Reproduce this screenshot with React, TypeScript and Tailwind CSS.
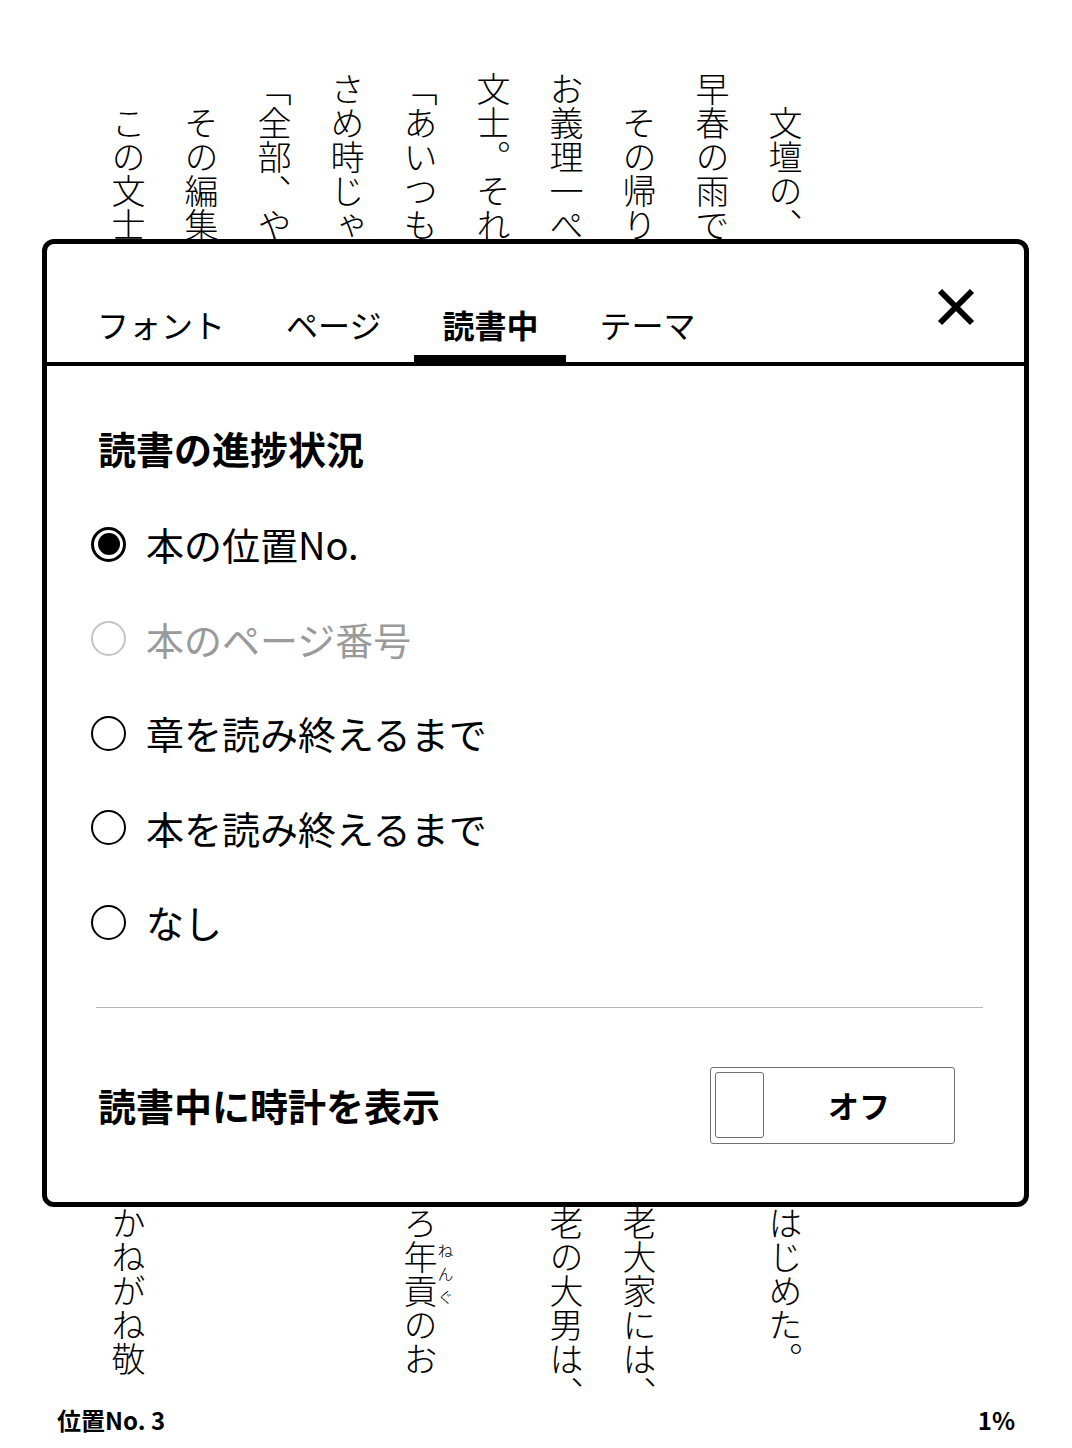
import React from "react";

const cols: { top: string; bottom: React.ReactNode }[] = [
  { top: "　文壇の、新しい風が吹き", bottom: "はじめた。" },
  { top: "早春の雨で、町は冷たく", bottom: "" },
  { top: "　その帰り道、", bottom: "老大家には、" },
  { top: "お義理一ぺんの挨拶をして", bottom: "老の大男は、" },
  { top: "文士。それは誰もが知る", bottom: "" },
  {
    top: "「あいつも、もう駄目だ",
    bottom: (
      <>
        ろ<ruby>
          年貢<rt className="text-[16px]">ねんぐ</rt>
        </ruby>
        のお
      </>
    ),
  },
  { top: "さめ時じゃないか", bottom: "" },
  { top: "「全部、やめてしまえ", bottom: "" },
  { top: "　その編集者は、", bottom: "" },
  { top: "　この文士の作品を、", bottom: "かねがね敬" },
];

const options = [
  { label: "本の位置No.", selected: true, disabled: false },
  { label: "本のページ番号", selected: false, disabled: true },
  { label: "章を読み終えるまで", selected: false, disabled: false },
  { label: "本を読み終えるまで", selected: false, disabled: false },
  { label: "なし", selected: false, disabled: false },
];

const tabs = [
  { label: "フォント", active: false },
  { label: "ページ", active: false },
  { label: "読書中", active: true },
  { label: "テーマ", active: false },
];

export default function App() {
  return (
    <div className="relative w-[1072px] h-[1448px] bg-white overflow-hidden text-black font-['Noto_Sans_CJK_JP',sans-serif]">
      {/* vertical book text */}
      <div className="h-[1410px] pt-[72px] overflow-hidden flex flex-row-reverse pr-[250px]">
        {cols.map((c, i) => (
          <div key={i} className="w-[73px] flex flex-col">
            <div className="w-[73px] h-[1134px] overflow-hidden [writing-mode:vertical-rl] text-[34px] leading-[73px] font-light whitespace-nowrap">
              {c.top}
            </div>
            <div className="w-[73px] h-[204px] [writing-mode:vertical-rl] text-[34px] leading-[73px] font-light whitespace-nowrap">
              {c.bottom}
            </div>
          </div>
        ))}
      </div>

      {/* footer */}
      <div className="flex justify-between px-[57px] text-[24px] leading-[20px] font-bold">
        <span>位置No. 3</span>
        <span>1%</span>
      </div>

      {/* settings modal */}
      <div className="absolute left-[42px] top-[239px] w-[987px] h-[968px] bg-white border-[5px] border-black rounded-[12px] flex flex-col">
        {/* header with tabs */}
        <div className="h-[122px] border-b-[4px] border-black flex items-end pl-[22px] shrink-0">
          <div className="flex gap-[5px]">
            {tabs.map((t) => (
              <div key={t.label} className="flex flex-col px-[28px]">
                <span
                  className={`h-[40px] leading-[40px] text-[32px] whitespace-nowrap ${
                    t.active ? "font-bold" : "font-normal"
                  }`}
                >
                  {t.label}
                </span>
                <span
                  className={`mt-[11px] h-[7px] -mx-[28px] ${t.active ? "bg-black" : "bg-transparent"}`}
                />
              </div>
            ))}
          </div>
          <button className="ml-auto self-start mt-[44px] mr-[49px] w-[38px] h-[38px]">
            <svg width="38" height="38" viewBox="0 0 38 38">
              <line x1="3" y1="3" x2="35" y2="35" stroke="black" strokeWidth="6" />
              <line x1="35" y1="3" x2="3" y2="35" stroke="black" strokeWidth="6" />
            </svg>
          </button>
        </div>

        {/* body */}
        <div className="flex flex-col">
          <div className="mt-[57px] pl-[51px] h-[50px] leading-[50px] text-[38px] font-bold">
            読書の進捗状況
          </div>
          <div className="mt-[24px] flex flex-col">
            {options.map((o) => (
              <div key={o.label} className="h-[94.5px] flex items-center pl-[44px] gap-[20px]">
                <span
                  className={`w-[35px] h-[35px] rounded-full flex items-center justify-center shrink-0 ${
                    o.disabled
                      ? "border-[2.5px] border-[#c4c4c4]"
                      : o.selected
                      ? "border-[3px] border-black"
                      : "border-[2.5px] border-black"
                  }`}
                >
                  {o.selected && <span className="w-[22px] h-[22px] rounded-full bg-black" />}
                </span>
                <span
                  className={`text-[38px] leading-[44px] ${o.disabled ? "text-[#9a9a9a]" : "text-black"}`}
                >
                  {o.label}
                </span>
              </div>
            ))}
          </div>

          <div className="mt-[37px] ml-[49px] mr-[41px] h-px bg-[#b8b8b8]" />

          <div className="mt-[59px] h-[77px] flex items-center pl-[51px] pr-[69px]">
            <span className="text-[38px] font-bold leading-[44px]">読書中に時計を表示</span>
            <div className="ml-auto w-[245px] h-[77px] border-[1.5px] border-[#707070] rounded-[3px] flex items-center pl-[4px]">
              <div className="w-[49px] h-[66px] border-[1.5px] border-[#707070] rounded-[3px]" />
              <div className="flex-1 text-center text-[31px] font-bold leading-[40px]">オフ</div>
            </div>
          </div>
        </div>
      </div>
    </div>
  );
}
